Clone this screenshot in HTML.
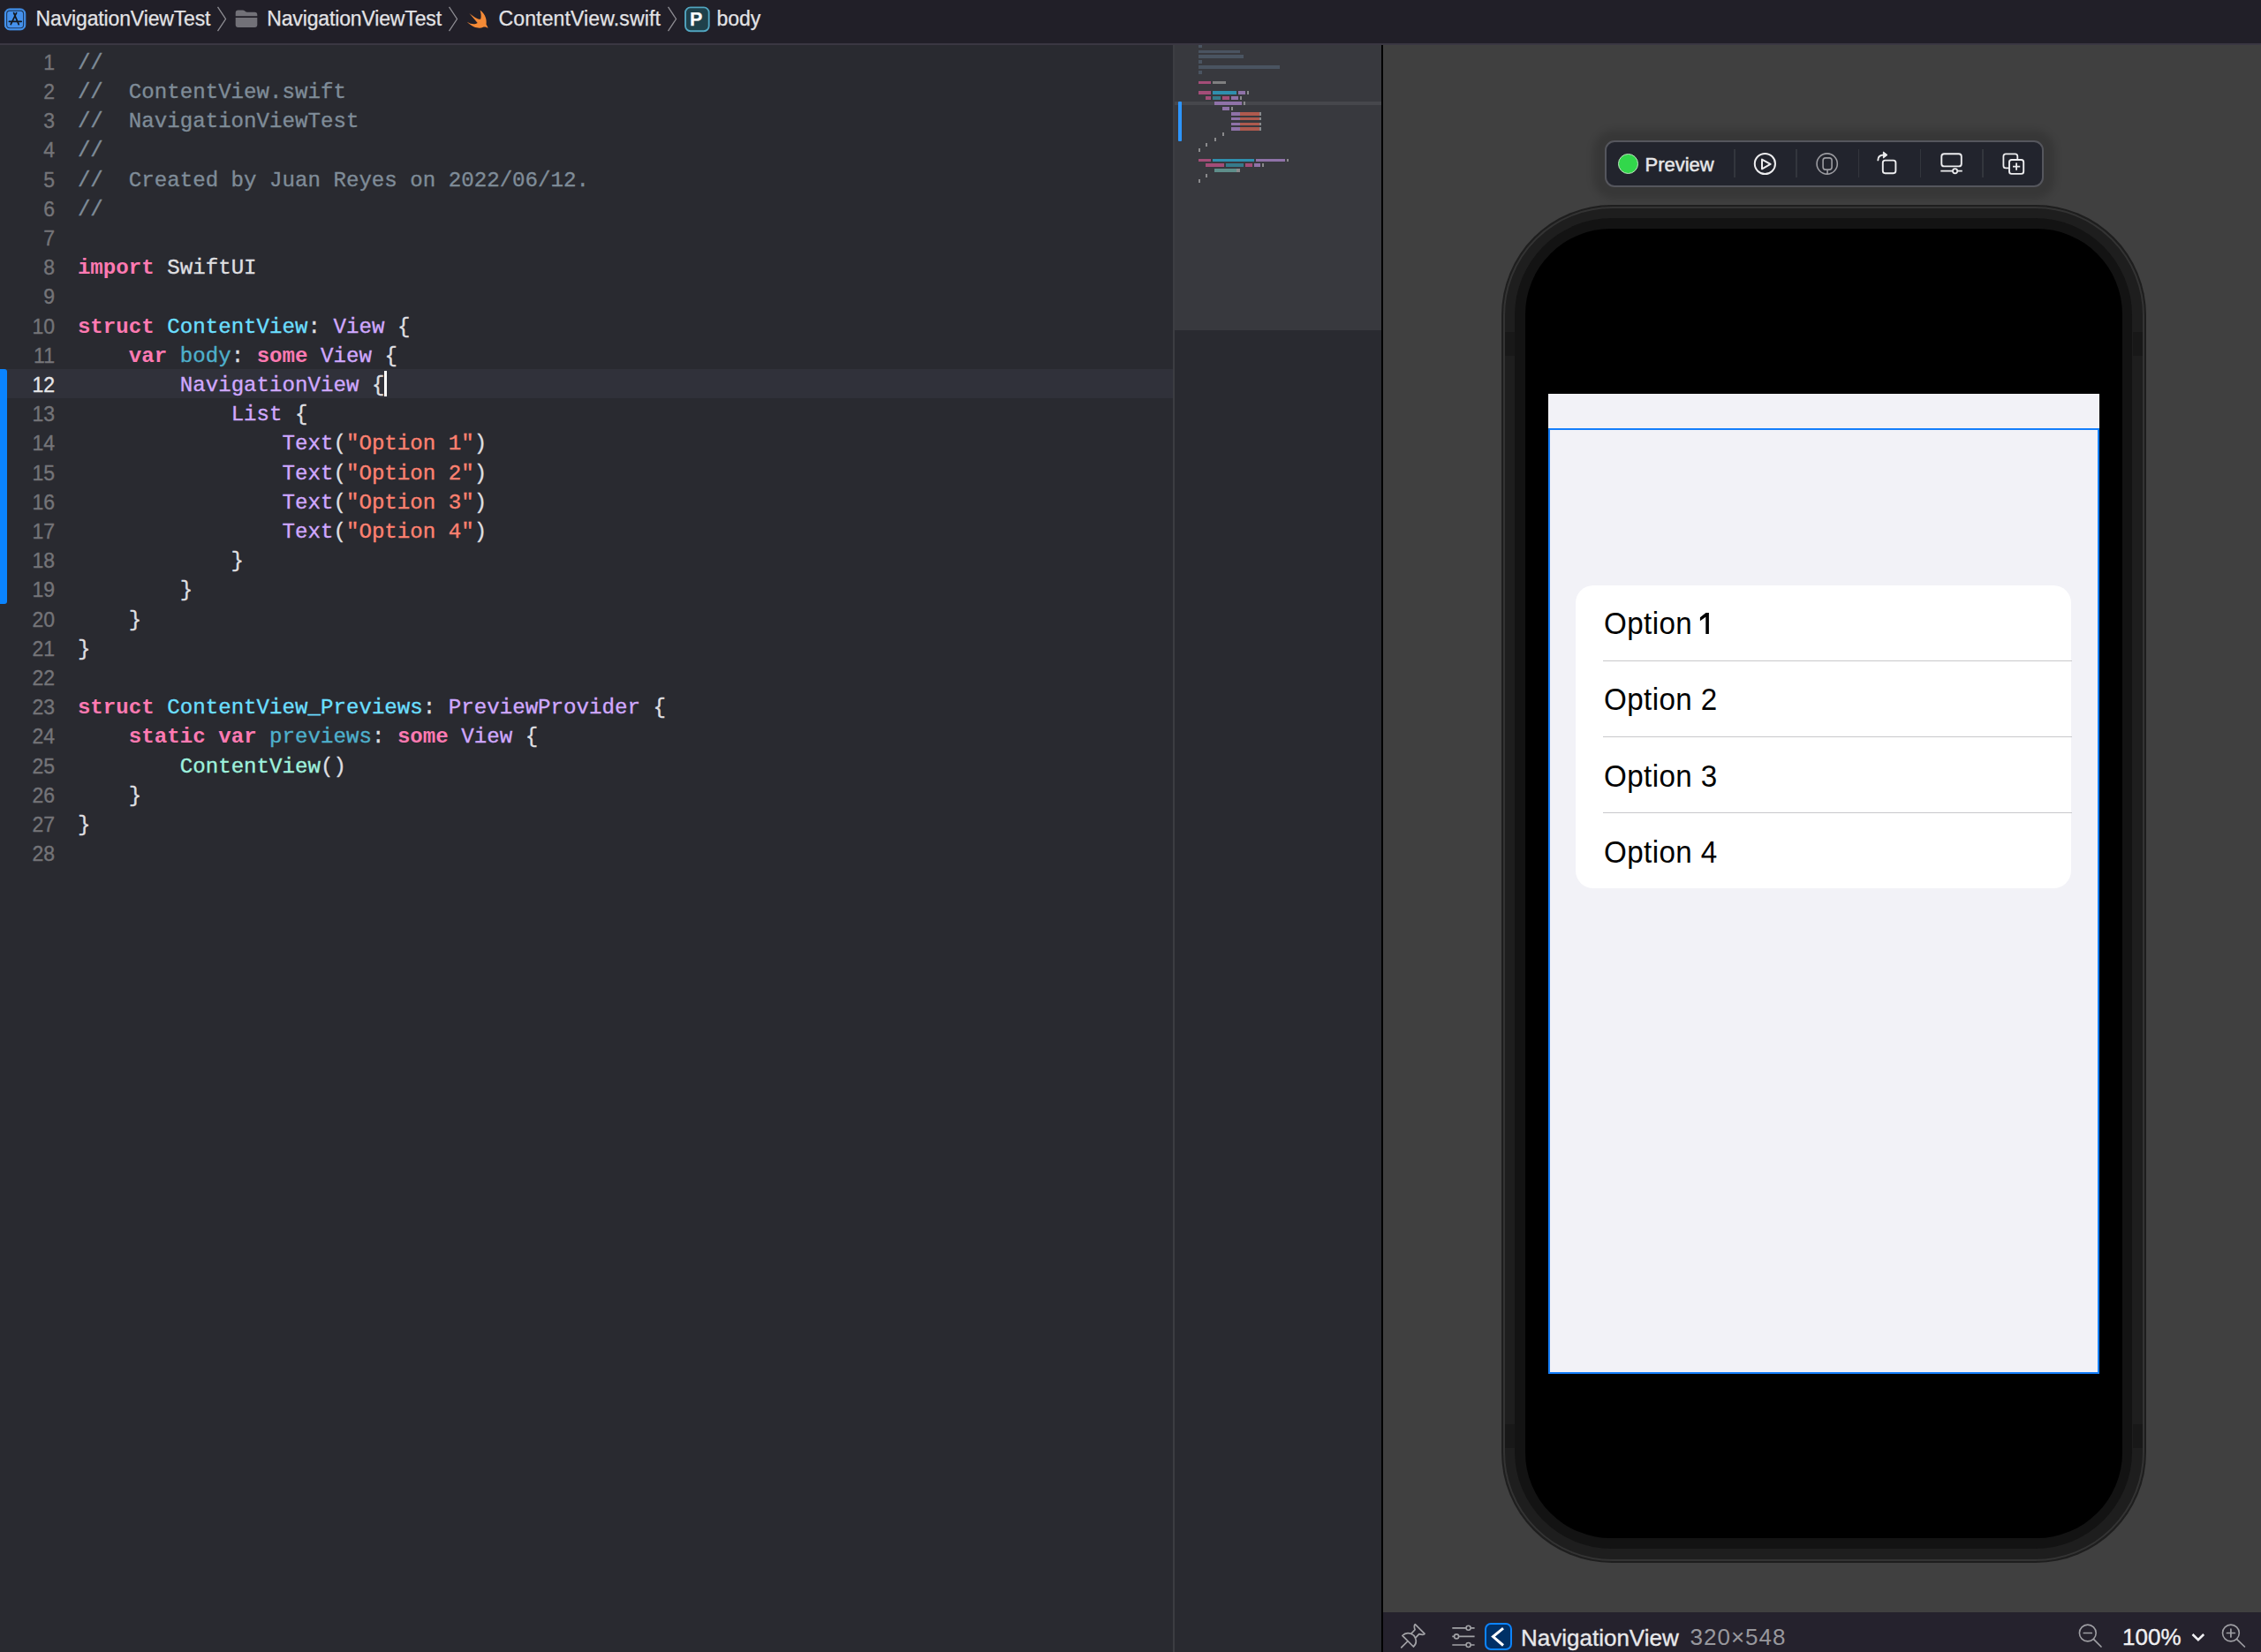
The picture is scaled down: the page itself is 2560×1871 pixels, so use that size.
<!DOCTYPE html>
<html><head><meta charset="utf-8">
<style>
*{margin:0;padding:0;box-sizing:border-box}
html,body{width:2560px;height:1871px;overflow:hidden;background:#292A30;font-family:"Liberation Sans",sans-serif}
.abs{position:absolute}
.opt{position:absolute;left:1816px;font-size:35.5px;line-height:40px;letter-spacing:0.45px;transform:scaleX(0.934);transform-origin:0 0;color:#000;white-space:nowrap}
.ln.cur{color:#E6E6E8}
#hdr{left:0;top:0;width:2560px;height:49px;background:#211F28}
#hdrline{left:0;top:49px;width:2560px;height:2px;background:#3A3742}
.crumb{position:absolute;top:-3px;height:49px;line-height:49px;font-size:23px;color:#E3E3E6;white-space:nowrap;-webkit-text-stroke:0.25px #E3E3E6}
#editor{left:0;top:51px;width:1328px;height:1820px;background:#292A30}
#code{position:absolute;left:0;top:54.9px;width:1328px;font-family:"Liberation Mono",monospace;font-size:24.13px;line-height:33.2px;white-space:pre;color:#DFDFE0;-webkit-text-stroke:0.35px currentColor}
.ln{position:absolute;left:0;width:62px;text-align:right;font-family:"Liberation Sans",sans-serif;font-size:23px;color:#747478}
.tx{position:absolute;left:87.9px}
.k{color:#FF7AB2;font-weight:bold;-webkit-text-stroke:0}
.c{color:#7F8C98}
.s{color:#FF8170}
.td{color:#6BDFFF}
.ot{color:#D0A8FF}
.od{color:#4EB0CC}
.pc{color:#9EF1DD}
#curline{left:0;top:418.1px;width:1328px;height:33.2px;background:#30313A}
#bluebar{left:0;top:418.1px;width:8px;height:265.6px;background:#0A84FF;border-radius:0 3px 3px 0}
#mmborder{left:1328px;top:51px;width:2px;height:1820px;background:#3C3D42}
#minimap{left:1330px;top:51px;width:234px;height:1820px;background:#292A30}
#mmview{left:1330px;top:51px;width:234px;height:323.3px;background:#38393E}
#sep{left:1564px;top:51px;width:2px;height:1820px;background:#000}
#canvas{left:1566px;top:51px;width:994px;height:1775px;background:#404040}
#bottom{left:1566px;top:1826px;width:994px;height:45px;background:#25222D}
</style></head><body>
<div id="hdr" class="abs">
<svg class="abs" style="left:0;top:0" width="40" height="49" viewBox="0 0 40 49">
<rect x="5.4" y="9.9" width="23.4" height="24" rx="5.5" fill="#4896F0" stroke="#3F8EEA" stroke-width="1"/>
<rect x="7.6" y="12.1" width="19" height="19.6" rx="3.5" fill="#4591EC" stroke="#1E3A60" stroke-width="1.1"/>
<path d="M15.6 14.6 L21.2 27.6 M18.6 14.6 L12.2 27.6 M10.4 24.3 H18.6 M19.6 24.3 H24.2" stroke="#15181E" stroke-width="1.7" stroke-linecap="round" fill="none"/>
</svg>
<div class="crumb" style="left:40.6px;letter-spacing:-0.14px">NavigationViewTest</div>
<svg class="abs" style="left:244px;top:6px" width="14" height="31" viewBox="0 0 14 31"><path d="M2.5 1.8 L11.5 15.5 L2.5 29.2" stroke="#8E8D93" stroke-width="1.3" fill="none"/></svg>
<svg class="abs" style="left:264px;top:8px" width="30" height="26" viewBox="0 0 30 26">
<path d="M2.7 6.6 Q2.7 3.6 5.7 3.6 H10.6 Q12.3 3.6 13.6 4.8 Q14.6 5.7 16 5.7 H24.3 Q27.3 5.7 27.3 8.7 V10.2 H2.7 Z" fill="#727178"/>
<path d="M2.7 11.9 H27.3 V20.1 Q27.3 23.1 24.3 23.1 H5.7 Q2.7 23.1 2.7 20.1 Z" fill="#727178"/>
</svg>
<div class="crumb" style="left:302.2px;letter-spacing:-0.14px">NavigationViewTest</div>
<svg class="abs" style="left:506px;top:6px" width="14" height="31" viewBox="0 0 14 31"><path d="M2.5 1.8 L11.5 15.5 L2.5 29.2" stroke="#8E8D93" stroke-width="1.3" fill="none"/></svg>
<svg class="abs" style="left:520px;top:4px" width="40" height="36" viewBox="0 0 1836 1652">
<path d="M400 950 C620 1090 820 1090 950 1005 L520 500 C760 690 930 820 1110 820 C1160 650 1120 470 1080 340 C1370 550 1440 860 1400 1080 C1440 1150 1480 1220 1490 1280 C1400 1220 1310 1210 1240 1225 C1080 1310 760 1300 400 950 Z" fill="#F58A36"/>
</svg>
<div class="crumb" style="left:564.5px;letter-spacing:0.14px">ContentView.swift</div>
<svg class="abs" style="left:754px;top:6px" width="14" height="31" viewBox="0 0 14 31"><path d="M2.5 1.8 L11.5 15.5 L2.5 29.2" stroke="#8E8D93" stroke-width="1.3" fill="none"/></svg>
<svg class="abs" style="left:770px;top:4px" width="40" height="36" viewBox="0 0 40 36">
<rect x="5" y="3.4" width="28.7" height="28.8" rx="6.5" fill="#0E0E10"/>
<rect x="6" y="4.4" width="26.7" height="26.8" rx="5.7" fill="#1F414B" stroke="#52A5C0" stroke-width="1.9"/>
</svg>
<div class="crumb" style="left:781px;font-weight:bold;color:#fff;font-size:21.5px;top:-2px">P</div>
<div class="crumb" style="left:811.5px">body</div>
</div>
<div id="hdrline" class="abs"></div>
<div id="editor" class="abs"></div>
<div id="curline" class="abs"></div>
<div id="bluebar" class="abs"></div>
<div class="abs" style="left:435px;top:420px;width:2.8px;height:29.2px;background:#FFF"></div>
<div id="code">
<div class="ln" style="top:0.0px">1</div><div class="tx" style="top:0.0px"><span class="c">//</span></div>
<div class="ln" style="top:33.2px">2</div><div class="tx" style="top:33.2px"><span class="c">//  ContentView.swift</span></div>
<div class="ln" style="top:66.4px">3</div><div class="tx" style="top:66.4px"><span class="c">//  NavigationViewTest</span></div>
<div class="ln" style="top:99.6px">4</div><div class="tx" style="top:99.6px"><span class="c">//</span></div>
<div class="ln" style="top:132.8px">5</div><div class="tx" style="top:132.8px"><span class="c">//  Created by Juan Reyes on 2022/06/12.</span></div>
<div class="ln" style="top:166.0px">6</div><div class="tx" style="top:166.0px"><span class="c">//</span></div>
<div class="ln" style="top:199.2px">7</div><div class="tx" style="top:199.2px"></div>
<div class="ln" style="top:232.4px">8</div><div class="tx" style="top:232.4px"><span class="k">import</span> SwiftUI</div>
<div class="ln" style="top:265.6px">9</div><div class="tx" style="top:265.6px"></div>
<div class="ln" style="top:298.8px">10</div><div class="tx" style="top:298.8px"><span class="k">struct</span> <span class="td">ContentView</span>: <span class="ot">View</span> {</div>
<div class="ln" style="top:332.0px">11</div><div class="tx" style="top:332.0px">    <span class="k">var</span> <span class="od">body</span>: <span class="k">some</span> <span class="ot">View</span> {</div>
<div class="ln cur" style="top:365.2px">12</div><div class="tx" style="top:365.2px">        <span class="ot">NavigationView</span> {</div>
<div class="ln" style="top:398.4px">13</div><div class="tx" style="top:398.4px">            <span class="ot">List</span> {</div>
<div class="ln" style="top:431.6px">14</div><div class="tx" style="top:431.6px">                <span class="ot">Text</span>(<span class="s">"Option 1"</span>)</div>
<div class="ln" style="top:464.8px">15</div><div class="tx" style="top:464.8px">                <span class="ot">Text</span>(<span class="s">"Option 2"</span>)</div>
<div class="ln" style="top:498.0px">16</div><div class="tx" style="top:498.0px">                <span class="ot">Text</span>(<span class="s">"Option 3"</span>)</div>
<div class="ln" style="top:531.2px">17</div><div class="tx" style="top:531.2px">                <span class="ot">Text</span>(<span class="s">"Option 4"</span>)</div>
<div class="ln" style="top:564.4px">18</div><div class="tx" style="top:564.4px">            }</div>
<div class="ln" style="top:597.6px">19</div><div class="tx" style="top:597.6px">        }</div>
<div class="ln" style="top:630.8px">20</div><div class="tx" style="top:630.8px">    }</div>
<div class="ln" style="top:664.0px">21</div><div class="tx" style="top:664.0px">}</div>
<div class="ln" style="top:697.2px">22</div><div class="tx" style="top:697.2px"></div>
<div class="ln" style="top:730.4px">23</div><div class="tx" style="top:730.4px"><span class="k">struct</span> <span class="td">ContentView_Previews</span>: <span class="ot">PreviewProvider</span> {</div>
<div class="ln" style="top:763.6px">24</div><div class="tx" style="top:763.6px">    <span class="k">static</span> <span class="k">var</span> <span class="od">previews</span>: <span class="k">some</span> <span class="ot">View</span> {</div>
<div class="ln" style="top:796.8px">25</div><div class="tx" style="top:796.8px">        <span class="pc">ContentView</span>()</div>
<div class="ln" style="top:830.0px">26</div><div class="tx" style="top:830.0px">    }</div>
<div class="ln" style="top:863.2px">27</div><div class="tx" style="top:863.2px">}</div>
<div class="ln" style="top:896.4px">28</div><div class="tx" style="top:896.4px"></div>
</div>
<div id="mmborder" class="abs"></div>
<div id="minimap" class="abs"></div>
<div id="mmview" class="abs"></div>
<div id="mm">
<div class="abs" style="left:1330px;top:115.14px;width:234px;height:3.70px;background:#46474C"></div>
<div class="abs" style="left:1357.08px;top:50.68px;width:3.92px;height:3.70px;background:#4A5461"></div>
<div class="abs" style="left:1357.08px;top:56.54px;width:46.84px;height:3.70px;background:#4A5461"></div>
<div class="abs" style="left:1357.08px;top:62.40px;width:50.76px;height:3.70px;background:#4A5461"></div>
<div class="abs" style="left:1357.08px;top:68.26px;width:3.92px;height:3.70px;background:#4A5461"></div>
<div class="abs" style="left:1357.08px;top:74.12px;width:91.72px;height:3.70px;background:#4A5461"></div>
<div class="abs" style="left:1357.08px;top:79.98px;width:3.92px;height:3.70px;background:#4A5461"></div>
<div class="abs" style="left:1357.08px;top:91.70px;width:13.73px;height:3.70px;background:#A34D78"></div>
<div class="abs" style="left:1372.77px;top:91.70px;width:15.47px;height:3.70px;background:#7F7F80"></div>
<div class="abs" style="left:1357.08px;top:103.42px;width:13.73px;height:3.70px;background:#A34D78"></div>
<div class="abs" style="left:1372.77px;top:103.42px;width:27.23px;height:3.70px;background:#2F8FAE"></div>
<div class="abs" style="left:1401.96px;top:103.42px;width:7.84px;height:3.70px;background:#8F72A8"></div>
<div class="abs" style="left:1411.76px;top:103.42px;width:1.96px;height:3.70px;background:#8A8A8C"></div>
<div class="abs" style="left:1364.92px;top:109.28px;width:5.88px;height:3.70px;background:#A34D78"></div>
<div class="abs" style="left:1372.77px;top:109.28px;width:9.59px;height:3.70px;background:#367A8A"></div>
<div class="abs" style="left:1384.31px;top:109.28px;width:7.84px;height:3.70px;background:#A34D78"></div>
<div class="abs" style="left:1394.12px;top:109.28px;width:7.84px;height:3.70px;background:#8F72A8"></div>
<div class="abs" style="left:1403.92px;top:109.28px;width:1.96px;height:3.70px;background:#8A8A8C"></div>
<div class="abs" style="left:1374.73px;top:115.14px;width:31.37px;height:3.70px;background:#8F72A8"></div>
<div class="abs" style="left:1407.84px;top:115.14px;width:1.96px;height:3.70px;background:#8A8A8C"></div>
<div class="abs" style="left:1384.31px;top:121.00px;width:7.84px;height:3.70px;background:#8F72A8"></div>
<div class="abs" style="left:1394.12px;top:121.00px;width:1.96px;height:3.70px;background:#8A8A8C"></div>
<div class="abs" style="left:1394.12px;top:126.86px;width:9.80px;height:3.70px;background:#8F72A8"></div>
<div class="abs" style="left:1403.92px;top:126.86px;width:21.79px;height:3.70px;background:#AE5A4E"></div>
<div class="abs" style="left:1425.71px;top:126.86px;width:1.96px;height:3.70px;background:#8A8A8C"></div>
<div class="abs" style="left:1394.12px;top:132.72px;width:9.80px;height:3.70px;background:#8F72A8"></div>
<div class="abs" style="left:1403.92px;top:132.72px;width:21.79px;height:3.70px;background:#AE5A4E"></div>
<div class="abs" style="left:1425.71px;top:132.72px;width:1.96px;height:3.70px;background:#8A8A8C"></div>
<div class="abs" style="left:1394.12px;top:138.58px;width:9.80px;height:3.70px;background:#8F72A8"></div>
<div class="abs" style="left:1403.92px;top:138.58px;width:21.79px;height:3.70px;background:#AE5A4E"></div>
<div class="abs" style="left:1425.71px;top:138.58px;width:1.96px;height:3.70px;background:#8A8A8C"></div>
<div class="abs" style="left:1394.12px;top:144.44px;width:9.80px;height:3.70px;background:#8F72A8"></div>
<div class="abs" style="left:1403.92px;top:144.44px;width:21.79px;height:3.70px;background:#AE5A4E"></div>
<div class="abs" style="left:1425.71px;top:144.44px;width:1.96px;height:3.70px;background:#8A8A8C"></div>
<div class="abs" style="left:1384.31px;top:150.31px;width:1.96px;height:3.70px;background:#8A8A8C"></div>
<div class="abs" style="left:1374.73px;top:156.17px;width:1.96px;height:3.70px;background:#8A8A8C"></div>
<div class="abs" style="left:1364.92px;top:162.03px;width:1.96px;height:3.70px;background:#8A8A8C"></div>
<div class="abs" style="left:1357.08px;top:167.89px;width:1.96px;height:3.70px;background:#8A8A8C"></div>
<div class="abs" style="left:1357.08px;top:179.61px;width:13.73px;height:3.70px;background:#A34D78"></div>
<div class="abs" style="left:1372.77px;top:179.61px;width:46.84px;height:3.70px;background:#2F8FAE"></div>
<div class="abs" style="left:1421.57px;top:179.61px;width:33.33px;height:3.70px;background:#8F72A8"></div>
<div class="abs" style="left:1456.86px;top:179.61px;width:1.96px;height:3.70px;background:#8A8A8C"></div>
<div class="abs" style="left:1364.92px;top:185.47px;width:21.57px;height:3.70px;background:#A34D78"></div>
<div class="abs" style="left:1388.45px;top:185.47px;width:19.39px;height:3.70px;background:#367A8A"></div>
<div class="abs" style="left:1409.80px;top:185.47px;width:7.84px;height:3.70px;background:#A34D78"></div>
<div class="abs" style="left:1419.61px;top:185.47px;width:7.84px;height:3.70px;background:#8F72A8"></div>
<div class="abs" style="left:1429.41px;top:185.47px;width:1.96px;height:3.70px;background:#8A8A8C"></div>
<div class="abs" style="left:1374.73px;top:191.33px;width:25.27px;height:3.70px;background:#5E8E8A"></div>
<div class="abs" style="left:1400.00px;top:191.33px;width:3.92px;height:3.70px;background:#8A8A8C"></div>
<div class="abs" style="left:1364.92px;top:197.19px;width:1.96px;height:3.70px;background:#8A8A8C"></div>
<div class="abs" style="left:1357.08px;top:203.05px;width:1.96px;height:3.70px;background:#8A8A8C"></div>
<div class="abs" style="left:1333.8px;top:115.2px;width:3.9px;height:44.6px;background:#2C95FF;border-radius:1px"></div>
</div>
<div id="sep" class="abs"></div>
<div id="canvas" class="abs"></div>
<!-- toolbar -->
<div class="abs" style="left:1817px;top:159.3px;width:496.5px;height:52.5px;border-radius:11px;background:#22242D;border:2px solid #55565D;box-shadow:0 1px 9px 13px rgba(0,0,0,0.14)"></div>
<div class="abs" style="left:1832px;top:174px;width:23px;height:23px;border-radius:50%;background:#32D74B;border:1px solid #BFE3C2"></div>
<div class="abs" style="left:1862.5px;top:170.5px;font-size:22px;line-height:32px;color:#E6E6E8;white-space:nowrap;-webkit-text-stroke:0.5px #E6E6E8">Preview</div>
<div class="abs" style="left:1963px;top:169.3px;width:1.6px;height:32.2px;background:#33363D"></div>
<div class="abs" style="left:2033px;top:169.3px;width:1.6px;height:32.2px;background:#33363D"></div>
<div class="abs" style="left:2103.5px;top:169.3px;width:1.6px;height:32.2px;background:#33363D"></div>
<div class="abs" style="left:2173.8px;top:169.3px;width:1.6px;height:32.2px;background:#33363D"></div>
<div class="abs" style="left:2244px;top:169.3px;width:1.6px;height:32.2px;background:#33363D"></div>
<svg class="abs" style="left:1960px;top:150px" width="360" height="70" viewBox="1960 150 360 70">
<circle cx="1998.4" cy="185.5" r="11.6" fill="none" stroke="#EDEDEF" stroke-width="2"/>
<path d="M1995 180.6 L2004.6 185.9 L1995 191.3 Z" fill="none" stroke="#EDEDEF" stroke-width="2" stroke-linejoin="round"/>
<circle cx="2068.7" cy="185.5" r="11.6" fill="none" stroke="#9C9CA1" stroke-width="1.6"/>
<rect x="2064.1" y="178.9" width="10" height="13.2" rx="2.8" fill="none" stroke="#9C9CA1" stroke-width="1.6"/>
<path d="M2069.1 192.1 V197" stroke="#9C9CA1" stroke-width="1.6"/>
<rect x="2131.8" y="181.6" width="14.6" height="14.6" rx="2.6" fill="none" stroke="#EDEDEF" stroke-width="1.9"/>
<path d="M2126.3 181.4 Q2126.3 175.5 2133 175.5" fill="none" stroke="#EDEDEF" stroke-width="1.9" stroke-linecap="round"/>
<path d="M2132.4 172 L2137 175.5 L2132.4 179 Z" fill="#EDEDEF" stroke="#EDEDEF" stroke-width="1" stroke-linejoin="round"/>
<rect x="2198.3" y="174.2" width="22.5" height="14.2" rx="3" fill="none" stroke="#EDEDEF" stroke-width="1.9"/>
<path d="M2197.3 193.7 H2210.8 M2216.4 193.7 H2221.8" stroke="#EDEDEF" stroke-width="1.7"/>
<circle cx="2213.6" cy="193.7" r="2.6" fill="none" stroke="#EDEDEF" stroke-width="1.7"/>
<path d="M2275 190.3 H2271 Q2268.4 190.3 2268.4 187.7 V176.9 Q2268.4 174.3 2271 174.3 H2281.7 Q2284.3 174.3 2284.3 176.9 V181" fill="none" stroke="#EDEDEF" stroke-width="1.8"/>
<rect x="2275" y="181" width="16.2" height="15.9" rx="2.6" fill="none" stroke="#EDEDEF" stroke-width="1.9"/>
<path d="M2283.1 184.6 V192.8 M2279 188.7 H2287.2" stroke="#EDEDEF" stroke-width="1.8"/>
</svg>
<!-- phone -->
<div class="abs" style="left:1700px;top:232px;width:730px;height:1537.6px;border-radius:125px;background:#1E1E1E"></div>
<div class="abs" style="left:1701.6px;top:233.6px;width:726.8px;height:1534.4px;border-radius:123.5px;border:2.4px solid #333;background:#1E1E1E"></div>
<div class="abs" style="left:1704px;top:376px;width:11.2px;height:27px;background:#181818"></div>
<div class="abs" style="left:1704px;top:1612.6px;width:11.2px;height:27.2px;background:#181818"></div>
<div class="abs" style="left:2414.6px;top:376px;width:11.2px;height:27px;background:#181818"></div>
<div class="abs" style="left:2414.6px;top:1612.6px;width:11.2px;height:27.2px;background:#181818"></div>
<div class="abs" style="left:1715.2px;top:247.1px;width:699.3px;height:1507.1px;border-radius:110px;background:#131313"></div>
<div class="abs" style="left:1727.4px;top:259px;width:675.3px;height:1483.4px;border-radius:97px;background:#000"></div>
<div class="abs" style="left:1752.7px;top:446px;width:624.8px;height:1109.4px;background:#F2F2F7"></div>
<div class="abs" style="left:1752.7px;top:485px;width:624.8px;height:1071px;border:2.5px solid #147EFB"></div>
<div class="abs" style="left:1783.7px;top:663px;width:561.8px;height:343.2px;border-radius:20px;background:#FFF"></div>
<div class="abs" style="left:1815px;top:747.6px;width:530.5px;height:1px;background:#C8C8CB"></div>
<div class="abs" style="left:1815px;top:833.9px;width:530.5px;height:1px;background:#C8C8CB"></div>
<div class="abs" style="left:1815px;top:920.2px;width:530.5px;height:1px;background:#C8C8CB"></div>
<div class="opt" style="top:686px">Option</div>
<svg class="abs" style="left:1920px;top:690px" width="20" height="32" viewBox="1920 690 20 32"><path d="M1924.9 699.3 L1931.5 693.9 H1934.9 V718 H1931.3 V698.8 L1924.9 703.2 Z" fill="#000"/></svg>
<div class="opt" style="top:772.3px">Option 2</div>
<div class="opt" style="top:858.6px">Option 3</div>
<div class="opt" style="top:944.9px">Option 4</div>

<div id="bottom" class="abs"></div>
<svg class="abs" style="left:1580px;top:1834px" width="40" height="37" viewBox="0 0 1786 1652">
<path d="M350 825 A396 396 0 0 1 788 728 L985 525 Q915 330 995 250 L1475 735 Q1440 805 1195 745 L1007 947 A396 396 0 0 1 910 1384 Z" fill="none" stroke="#A2A2A6" stroke-width="78" stroke-linejoin="round"/>
<path d="M788 728 A396 396 0 0 1 1007 947" fill="none" stroke="#A2A2A6" stroke-width="70"/>
<path d="M620 1105 L300 1425" stroke="#A2A2A6" stroke-width="78" stroke-linecap="round"/>
</svg>
<svg class="abs" style="left:1640px;top:1836px" width="36" height="34" viewBox="1640 1836 36 34">
<path d="M1644.3 1843.8 H1660 M1665.2 1843.8 H1669.6 M1644.3 1853.4 H1646.5 M1651.7 1853.4 H1669.6 M1644.3 1863 H1660 M1665.2 1863 H1669.6" stroke="#A2A2A6" stroke-width="1.7"/>
<circle cx="1662.6" cy="1843.8" r="2.5" fill="none" stroke="#A2A2A6" stroke-width="1.6"/>
<circle cx="1649.1" cy="1853.4" r="2.5" fill="none" stroke="#A2A2A6" stroke-width="1.6"/>
<circle cx="1662.6" cy="1863" r="2.5" fill="none" stroke="#A2A2A6" stroke-width="1.6"/>
</svg>
<div class="abs" style="left:1681.2px;top:1838px;width:31.1px;height:30.5px;border-radius:7px;background:#003066;border:2.5px solid #0D84FF"></div>
<svg class="abs" style="left:1680px;top:1836px" width="36" height="34" viewBox="1680 1836 36 34">
<path d="M1702 1844.2 L1690.5 1853.6 L1702 1863.5" fill="none" stroke="#FFF" stroke-width="3"/>
</svg>
<div class="abs" style="left:1722px;top:1837.5px;font-size:26px;line-height:34px;color:#E8E8EA;white-space:nowrap;-webkit-text-stroke:0.35px #E8E8EA">NavigationView</div>
<div class="abs" style="left:1913.5px;top:1837px;letter-spacing:1px;font-size:26px;line-height:34px;color:#98989D;white-space:nowrap">320×548</div>
<svg class="abs" style="left:2340px;top:1830px" width="220" height="41" viewBox="2340 1830 220 41">
<circle cx="2363.8" cy="1849.5" r="9.4" fill="none" stroke="#9E9EA3" stroke-width="1.6"/>
<path d="M2370.6 1856.6 L2379 1865 M2359.3 1849.5 H2368.3" stroke="#9E9EA3" stroke-width="1.7" stroke-linecap="round"/>
<path d="M2482.5 1851 L2488.9 1857.2 L2495.2 1851" fill="none" stroke="#F0F0F2" stroke-width="2.6"/>
<circle cx="2525.9" cy="1849.5" r="9.4" fill="none" stroke="#9E9EA3" stroke-width="1.6"/>
<path d="M2532.7 1856.6 L2541.4 1865 M2521.4 1849.5 H2530.4 M2525.9 1845 V1854" stroke="#9E9EA3" stroke-width="1.7" stroke-linecap="round"/>
</svg>
<div class="abs" style="left:2403px;top:1837px;font-size:26px;line-height:34px;color:#F0F0F2;white-space:nowrap;-webkit-text-stroke:0.35px #F0F0F2">100%</div>

</body></html>
